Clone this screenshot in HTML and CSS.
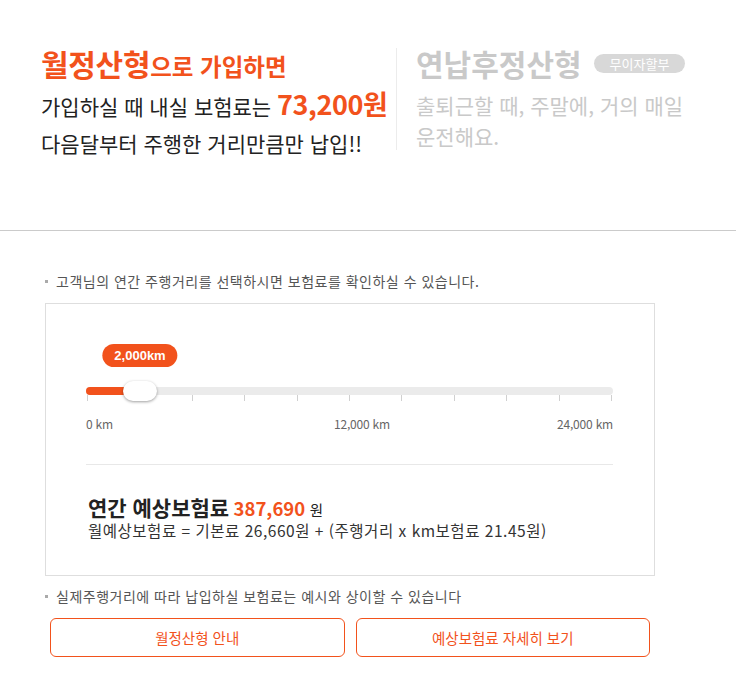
FILE: index.html
```html
<!DOCTYPE html>
<html lang="ko">
<head>
<meta charset="utf-8">
<link rel="stylesheet" href="styles.css">
</head>
<body>
<div class="top">
  <div class="col-left">
    <div class="hl"><span class="hl-big">월정산형</span><span class="hl-small">으로 가입하면</span></div>
    <div class="line2">가입하실 때 내실 보험료는 <span class="price">73,200원</span></div>
    <div class="line3">다음달부터 주행한 거리만큼만 납입!!</div>
  </div>
  <div class="vdivider"></div>
  <div class="col-right">
    <div class="hr"><span class="hr-title">연납후정산형</span><span class="badge">무이자할부</span></div>
    <div class="rline">출퇴근할 때, 주말에, 거의 매일</div>
    <div class="rline">운전해요.</div>
  </div>
</div>

<div class="calc">
  <p class="note">고객님의 연간 주행거리를 선택하시면 보험료를 확인하실 수 있습니다.</p>
  <div class="box">
    <div class="slider">
      <div class="bubble-row"><span class="bubble" style="left: 10.25%">2,000km</span></div>
      <div class="track">
        <div class="fill" style="width: 10.25%"></div>
        <div class="handle" style="left: 10.25%"></div>
      </div>
      <div class="ticks">
        <i></i><i></i><i></i><i></i><i></i><i></i><i></i><i></i><i></i><i></i><i></i>
      </div>
      <div class="labels">
        <span class="lab-first">0 km</span>
        <span class="lab-mid">12,000 km</span>
        <span class="lab-last">24,000 km</span>
      </div>
    </div>
    <div class="result">
      <div class="total"><span class="total-label">연간 예상보험료</span> <span class="total-val">387,690</span> <span class="won">원</span></div>
      <div class="formula">월예상보험료 = 기본료 26,660원 + (주행거리 x km보험료 21.45원)</div>
    </div>
  </div>
  <p class="note note2">실제주행거리에 따라 납입하실 보험료는 예시와 상이할 수 있습니다</p>
  <div class="buttons">
    <button class="btn">월정산형 안내</button>
    <button class="btn">예상보험료 자세히 보기</button>
  </div>
</div>
</body>
</html>
```

FILE: styles.css
```css
* { box-sizing: border-box; }
body {
  margin: 0;
  background: #fff;
  font-family: "Noto Sans CJK KR", "Noto Sans", sans-serif;
  color: #222;
}

.top {
  display: flex;
  align-items: flex-start;
  height: 231px;
  border-bottom: 1px solid #cbcbcb;
}
.col-left {
  width: 396px;
  padding-left: 41px;
  padding-top: 45px;
}
.hl {
  height: 36px;
  line-height: 36px;
  color: #f2521c;
  font-weight: 700;
  white-space: nowrap;
  margin-bottom: 3px;
}
.hl-big { font-size: 30px; letter-spacing: -0.3px; }
.hl-small { font-size: 23.5px; }
.line2, .line3 {
  font-size: 21px;
  line-height: 40px;
  height: 40px;
  white-space: nowrap;
  color: #222;
}
.line3 { line-height: 38px; height: 38px; }
.price {
  font-size: 27px;
  font-weight: 700;
  color: #f2521c;
  letter-spacing: -0.4px;
}
.vdivider {
  width: 1px;
  height: 102px;
  margin-top: 48px;
  background: #ececec;
}
.col-right {
  padding-left: 19px;
  padding-top: 45px;
}
.hr {
  height: 36px;
  line-height: 36px;
  display: flex;
  align-items: center;
  white-space: nowrap;
}
.hr-title {
  font-size: 30px;
  font-weight: 700;
  color: #c9c9c9;
}
.badge {
  margin-left: 12px;
  height: 19px;
  line-height: 19px;
  padding: 0 16px;
  border-radius: 10px;
  background: #d8d8d8;
  color: #fff;
  font-size: 13px;
}
.rline {
  font-size: 21px;
  line-height: 31px;
  color: #c9c9c9;
  white-space: nowrap;
}
.hr + .rline { margin-top: 9px; }

.calc {
  padding: 40px 0 0 45px;
  width: 655px;
}
.note {
  margin: 0 0 12px 0;
  font-size: 14px;
  line-height: 20px;
  color: #555;
  display: flex;
  align-items: center;
  letter-spacing: 0.5px;
  white-space: nowrap;
}
.note::before {
  content: "";
  width: 3px;
  height: 3px;
  background: #aaa;
  margin-right: 8px;
}
.box {
  border: 1px solid #dedede;
  padding: 40px 41px 35px 40px;
}
.slider { position: relative; }
.bubble-row {
  position: relative;
  height: 23px;
  margin-bottom: 20px;
}
.bubble {
  position: absolute;
  top: 0;
  transform: translateX(-50%);
  height: 23px;
  line-height: 23px;
  padding: 0 12px;
  border-radius: 12px;
  background: #f2521c;
  color: #fff;
  font-size: 13px;
  font-weight: 700;
  font-family: "Liberation Sans", Arial, sans-serif;
  white-space: nowrap;
}
.track {
  position: relative;
  height: 8px;
  border-radius: 4px;
  background: #ebebeb;
}
.fill {
  height: 8px;
  border-radius: 4px 0 0 4px;
  background: #f2521c;
}
.handle {
  position: absolute;
  top: -6px;
  width: 34px;
  height: 20px;
  margin-left: -17px;
  border-radius: 10px;
  background: #fff;
  box-shadow: 0 1px 3px rgba(0,0,0,0.38);
}
.ticks {
  display: flex;
  justify-content: space-between;
  height: 6px;
  padding: 0 1px 0 1px;
}
.ticks i {
  width: 1px;
  height: 6px;
  background: #d0d0d0;
}
.labels {
  display: flex;
  margin-top: 14px;
  height: 18px;
  line-height: 18px;
  font-size: 12px;
  color: #666;
  letter-spacing: -0.2px;
  white-space: nowrap;
}
.lab-first { width: 248px; flex: none; }
.lab-last { margin-left: auto; }

.result {
  margin-top: 31px;
  border-top: 1px solid #e8e8e8;
  padding-top: 29px;
  padding-left: 2px;
}
.total {
  height: 26px;
  line-height: 26px;
  white-space: nowrap;
}
.total-label {
  font-size: 21px;
  font-weight: 700;
  color: #222;
}
.total-val {
  font-size: 18.5px;
  font-weight: 700;
  color: #f2521c;
}
.won { font-size: 14.5px; color: #222; }
.formula {
  font-size: 15.5px;
  line-height: 20px;
  color: #333;
  white-space: nowrap;
  letter-spacing: 0.52px;
}

.note2 { margin-top: 10px; margin-bottom: 12px; }

.buttons {
  display: flex;
  gap: 11px;
  padding: 0 5px;
}
.btn {
  flex: 1;
  height: 39px;
  border: 1px solid #f2521c;
  border-radius: 6px;
  background: #fff;
  color: #f2521c;
  font-family: "Noto Sans CJK KR", sans-serif;
  font-size: 14.5px;
  cursor: pointer;
}
```
